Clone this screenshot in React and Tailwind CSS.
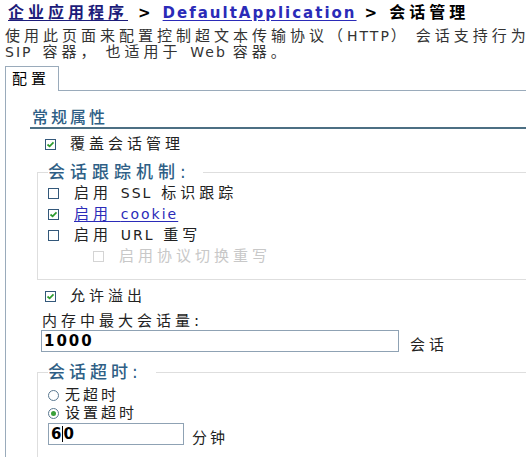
const Latin = ({ children, className = "" }) => (
  <span className={`text-[14px] tracking-[2px] ${className}`}>{children}</span>
);

const Check = ({ checked = false, disabled = false }) => (
  <span
    className={`inline-flex w-[11px] h-[11px] shrink-0 items-center justify-center border bg-white ${
      disabled ? "border-[#d4d4d4]" : "border-[#33587a]"
    }`}
  >
    {checked && (
      <svg width="9" height="9" viewBox="0 0 9 9">
        <path d="M1.5 4.5 L3.6 6.4 L7.5 2.4" stroke="#2d9b2d" strokeWidth="1.7" fill="none" />
      </svg>
    )}
  </span>
);

const Radio = ({ checked = false }) => (
  <span className="inline-flex w-[11px] h-[11px] shrink-0 items-center justify-center rounded-full border border-[#5a7890] bg-white">
    {checked && <span className="w-[5px] h-[5px] rounded-full bg-[#3aa03a]" />}
  </span>
);

export default function App() {
  return (
    <div className="w-[526px] h-[457px] overflow-hidden bg-white text-[15px] tracking-[4px] text-[#222] font-['DejaVu_Sans','Noto_Sans_CJK_SC',sans-serif]">
      {/* breadcrumb */}
      <div className="pt-[5px] pl-[8px] h-[21px] leading-[16px] text-[16px] font-bold whitespace-nowrap">
        <span className="text-[#1c1c7a] underline underline-offset-2">企业应用程序</span>
        <span className="ml-[10px] text-[15px] tracking-[2px] text-black">&gt;</span>
        <span className="ml-[10px] text-[15px] tracking-[2px] text-[#2b2bb8] underline underline-offset-2">
          DefaultApplication
        </span>
        <span className="ml-[8px] text-[15px] tracking-[2px] text-black">&gt;</span>
        <span className="ml-[10px] text-black">会话管理</span>
      </div>

      {/* description */}
      <div className="mt-[7px] pl-[5px] leading-[16px] text-[#333] whitespace-nowrap">
        <div className="h-[16px]">
          使用此页面来配置控制超文本传输协议（<Latin className="tracking-[0px]">HTTP</Latin>
          <span className="mr-[6px]">）</span>会话支持行为，
        </div>
        <div className="h-[16px]">
          <Latin>SIP</Latin>
          <span className="ml-[10px]">容器，</span>
          <span className="ml-[6px]">也适用于</span> <Latin>Web</Latin>
          <span className="ml-[6px]">容器。</span>
        </div>
      </div>

      {/* tab panel */}
      <div className="mt-[6px] ml-[5px] border-l border-[#9aabbb]">
        <div className="flex h-[25px]">
          <div className="w-[53px] border-t border-r border-[#9aabbb] pl-[6px] leading-[24px] text-black">
            配置
          </div>
          <div className="flex-1 border-b border-[#9aabbb]" />
        </div>

        <div className="mt-[18px] ml-[24px] w-[500px] border-b-2 border-[#4c6f83] pl-[2px] h-[20px] leading-[18px] text-[16px] tracking-[3px] font-medium text-[#2f5f86]">
          常规属性
        </div>

        <label className="mt-[7px] ml-[39px] flex items-center h-[16px] gap-[14px]">
          <Check checked />
          <span>覆盖会话管理</span>
        </label>

        <fieldset className="mt-[10px] ml-[31px] w-[500px] border border-[#dedede] pl-[10px] pb-[13px]">
          <legend className="pr-[12px] h-[21px] leading-[20px] text-[17px] tracking-[5px] font-medium text-[#2f5f86]">
            会话跟踪机制:
          </legend>
          <div className="flex items-center h-[21px] gap-[15px]">
            <Check />
            <span>
              启用 <Latin>SSL</Latin> 标识跟踪
            </span>
          </div>
          <div className="flex items-center h-[21px] gap-[15px]">
            <Check checked />
            <span className="text-[#2b2bb8] underline underline-offset-2">
              启用 <Latin>cookie</Latin>
            </span>
          </div>
          <div className="flex items-center h-[21px] gap-[15px]">
            <Check />
            <span>
              启用 <Latin>URL</Latin> 重写
            </span>
          </div>
          <div className="flex items-center h-[20px] gap-[15px] pl-[45px] text-[#c8c8c8]">
            <Check disabled />
            <span>启用协议切换重写</span>
          </div>
        </fieldset>

        <label className="mt-[8px] ml-[39px] flex items-center h-[16px] gap-[14px]">
          <Check checked />
          <span>允许溢出</span>
        </label>

        <div className="mt-[9px] ml-[36px] h-[16px] leading-[16px]">内存中最大会话量:</div>
        <div className="mt-[1px] ml-[35px] flex items-end gap-[11px]">
          <div className="w-[358px] h-[22px] border border-[#8fa2b4] pl-[2px] leading-[20px] text-[15px] font-bold text-black">
            <span className="tracking-[2px]">1000</span>
          </div>
          <span className="leading-[16px] -mb-[1px]">会话</span>
        </div>

        <fieldset className="mt-[10px] ml-[31px] w-[500px] border border-[#dedede] pl-[10px] pb-[12px]">
          <legend className="pr-[14px] h-[20px] leading-[20px] text-[17px] tracking-[4px] font-medium text-[#2f5f86]">
            会话超时:
          </legend>
          <div className="mt-[4px] flex items-center h-[18px] gap-[6px]">
            <Radio />
            <span className="tracking-[3px]">无超时</span>
          </div>
          <div className="flex items-center h-[18px] gap-[6px]">
            <Radio checked />
            <span className="tracking-[3px]">设置超时</span>
          </div>
          <div className="mt-[1px] flex items-end gap-[8px]">
            <div className="flex items-center w-[136px] h-[22px] border border-[#8fa2b4] pl-[2px] text-[15px] font-bold text-black">
              <span className="tracking-[1px]">6</span>
              <span className="w-[1px] h-[16px] bg-black" />
              <span className="tracking-[2px]">0</span>
            </div>
            <span className="leading-[16px] -mb-[1px] tracking-[3px]">分钟</span>
          </div>
        </fieldset>
      </div>
    </div>
  );
}
